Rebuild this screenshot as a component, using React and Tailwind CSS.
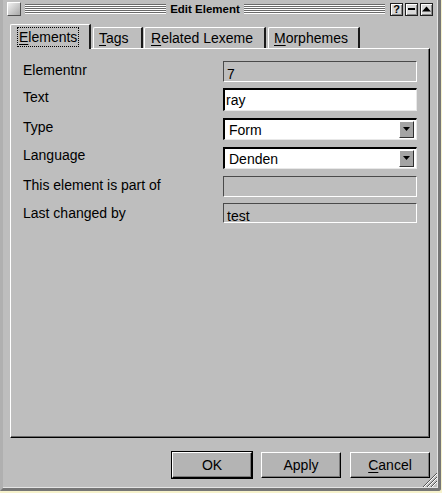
import React from "react";

function Groove() {
  return (
    <div className="flex-1 flex flex-col">
      {[0, 1, 2, 3, 4].map((i) => (
        <div key={i} className="h-[2px] border-t border-t-[#6a6a6a] border-b border-b-white" />
      ))}
    </div>
  );
}

function TBtn({ children }) {
  return (
    <div className="w-[13px] h-[13px] border border-[#202020] bg-[#d8d8d8] flex items-center justify-center shadow-[inset_1px_1px_0_#ffffff,inset_-1px_-1px_0_#8a8a8a]">
      {children}
    </div>
  );
}

function Tab({ children, selected, w, pl, ml }) {
  if (selected) {
    return (
      <div
        className={`relative z-10 h-[25px] -mb-px bg-[#bebebe] border-l border-t border-white border-r-2 border-r-[#1a1a1a] rounded-tl-[2px] flex items-center ${w} ${pl} ${ml}`}
      >
        <span className="border border-dotted border-black px-[1px] py-[1px] leading-[16px]">{children}</span>
      </div>
    );
  }
  return (
    <div
      className={`h-[21px] bg-[#bebebe] border-l border-t border-white border-r-2 border-r-[#1a1a1a] rounded-tl-[2px] flex items-center ${w} ${pl} ${ml}`}
    >
      <span className="leading-[16px]">{children}</span>
    </div>
  );
}

function U({ children }) {
  return <span className="underline underline-offset-[2px] decoration-1">{children}</span>;
}

function Arrow() {
  return (
    <div className="absolute right-[2px] top-[1px] bottom-[1px] w-[15px] bg-[#a4a4a4] border-t border-l border-white border-r border-b border-r-[#303030] border-b-[#303030] flex items-center justify-center">
      <svg width="8" height="5" viewBox="0 0 8 5">
        <path d="M0 0 H7 L3.5 4 Z" fill="#000" />
      </svg>
    </div>
  );
}

function Row({ label, mt, h, lmb, children }) {
  return (
    <div className={`flex items-center pl-[12px] ${mt} ${h}`}>
      <div className={`w-[200px] leading-[16px] ${lmb}`}>{label}</div>
      {children}
    </div>
  );
}

function ReadOnly({ value, h }) {
  return (
    <div className={`w-[194px] ${h} border-t border-l border-[#4a4a4a] border-r border-b border-r-white border-b-white pl-[3px] pt-[4px] leading-[16px]`}>
      {value}
    </div>
  );
}

function Btn({ children, def }) {
  return (
    <div
      className={`w-[80px] h-[26px] bg-[#b4b4b4] border-t border-l border-white border-r border-b border-r-black border-b-black shadow-[inset_-1px_-1px_0_#7a7a7a] flex items-center justify-center leading-[16px] ${def ? "outline outline-black" : ""}`}
    >
      {children}
    </div>
  );
}

export default function App() {
  return (
    <div className="w-[442px] h-[493px] bg-[#f6f2cc] font-['Liberation_Sans',Arial,sans-serif] text-[14px] text-black">
      <div className="relative w-[441px] h-[491px] bg-[#bebebe] border-l-[3px] border-l-[#b0b0b0] border-r-[3px] border-b-[3px] border-r-[#767676] border-b-[#767676] shadow-[inset_-1px_-1px_0_#e4e4e4] rounded-br-[3px] flex flex-col">
        {/* Title bar */}
        <div className="h-[18px] flex items-center pl-[4px] pr-[5px]">
          <div className="w-[14px] h-[14px] border-t border-l border-white border-r border-b border-r-[#505050] border-b-[#505050] bg-linear-to-br from-[#f0f0f0] to-[#a8a8a8]" />
          <div className="flex-1 flex items-center ml-[4px]">
            <Groove />
            <div className="px-[4px] font-bold text-[11.5px] leading-[14px]">Edit Element</div>
            <Groove />
          </div>
          <div className="flex gap-[2px] ml-[5px]">
            <TBtn>
              <span className="font-bold text-[11px] leading-[11px]">?</span>
            </TBtn>
            <TBtn>
              <div className="w-[7px] h-[2px] bg-black" />
            </TBtn>
            <TBtn>
              <svg width="9" height="6" viewBox="0 0 9 6">
                <path d="M0 5.5 L4.5 0.5 L9 5.5 Z" fill="#000" />
              </svg>
            </TBtn>
          </div>
        </div>

        {/* Tabs */}
        <div className="mt-[6px] h-[24px] flex items-end ml-[7px]">
          <Tab selected w="w-[81px]" pl="pl-[6px]" ml="">
            <U>E</U>lements
          </Tab>
          <Tab w="w-[50px]" pl="pl-[5px]" ml="ml-[2px]">
            <U>T</U>ags
          </Tab>
          <Tab w="w-[122px]" pl="pl-[6px]" ml="ml-[1px]">
            <U>R</U>elated Lexeme
          </Tab>
          <Tab w="w-[92px]" pl="pl-[5px]" ml="ml-[2px]">
            <U>M</U>orphemes
          </Tab>
        </div>

        {/* Panel */}
        <div className="ml-[7px] w-[420px] h-[390px] border-t border-l border-white border-r border-b border-r-black border-b-black shadow-[inset_-1px_-1px_0_#6a6a6a] flex flex-col">
          <Row label="Elementnr" mt="mt-[12px]" h="h-[21px]" lmb="mb-[3px]">
            <ReadOnly value="7" h="h-[21px]" />
          </Row>
          <Row label="Text" mt="mt-[6px]" h="h-[23px]" lmb="mb-[5px]">
            <div className="w-[194px] h-[23px] bg-white border-t-2 border-l-2 border-black border-r border-b border-r-[#e8e8e8] border-b-[#e8e8e8] pl-[1px] flex items-center leading-[16px]">
              ray
            </div>
          </Row>
          <Row label="Type" mt="mt-[7px]" h="h-[22px]" lmb="mb-[4px]">
            <div className="relative w-[194px] h-[22px] bg-white border-t-2 border-l-2 border-black border-r border-b border-r-[#e8e8e8] border-b-[#e8e8e8] pl-[4px] flex items-center leading-[16px]">
              Form
              <Arrow />
            </div>
          </Row>
          <Row label="Language" mt="mt-[7px]" h="h-[22px]" lmb="mb-[6px]">
            <div className="relative w-[194px] h-[22px] bg-white border-t-2 border-l-2 border-black border-r border-b border-r-[#e8e8e8] border-b-[#e8e8e8] pl-[4px] flex items-center leading-[16px]">
              Denden
              <Arrow />
            </div>
          </Row>
          <Row label="This element is part of" mt="mt-[7px]" h="h-[21px]" lmb="mb-[3px]">
            <ReadOnly value="" h="h-[21px]" />
          </Row>
          <Row label="Last changed by" mt="mt-[6px]" h="h-[20px]" lmb="">
            <ReadOnly value="test" h="h-[20px]" />
          </Row>
        </div>

        {/* Buttons */}
        <div className="mt-[14px] flex justify-end gap-[9px] pr-[8px]">
          <Btn def>OK</Btn>
          <Btn>Apply</Btn>
          <Btn>
            <span>
              <U>C</U>ancel
            </span>
          </Btn>
        </div>

        {/* Resize grip */}
        <svg className="absolute right-[1px] bottom-[1px]" width="15" height="15" viewBox="0 0 15 15">
          <path d="M15 1 L1 15" stroke="#555" strokeWidth="1" />
          <path d="M15 2 L2 15" stroke="#fff" strokeWidth="1" />
          <path d="M15 5 L5 15" stroke="#555" strokeWidth="1" />
          <path d="M15 6 L6 15" stroke="#fff" strokeWidth="1" />
          <path d="M15 9 L9 15" stroke="#555" strokeWidth="1" />
          <path d="M15 10 L10 15" stroke="#fff" strokeWidth="1" />
        </svg>
      </div>
    </div>
  );
}
